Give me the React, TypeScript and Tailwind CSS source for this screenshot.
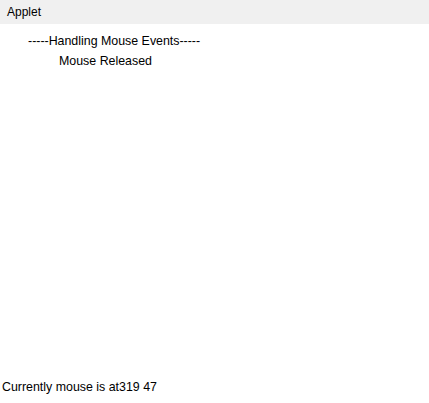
export default function App() {
  return (
    <div className="flex h-[403px] w-[429px] flex-col bg-white text-[12px] text-black [font-family:'Liberation_Sans',Arial,sans-serif]">
      <div className="flex h-6 items-center bg-[#f0f0f0] px-[7px]">Applet</div>
      <div className="flex flex-1 flex-col text-[12.4px]">
        <div className="mt-[10px] pl-[28px] leading-[14px]">-----Handling Mouse Events-----</div>
        <div className="mt-[6px] pl-[59px] leading-[14px]">Mouse Released</div>
        <div className="mt-auto mb-[9px] pl-[2px] leading-[14px]">Currently mouse is at319 47</div>
      </div>
    </div>
  );
}
